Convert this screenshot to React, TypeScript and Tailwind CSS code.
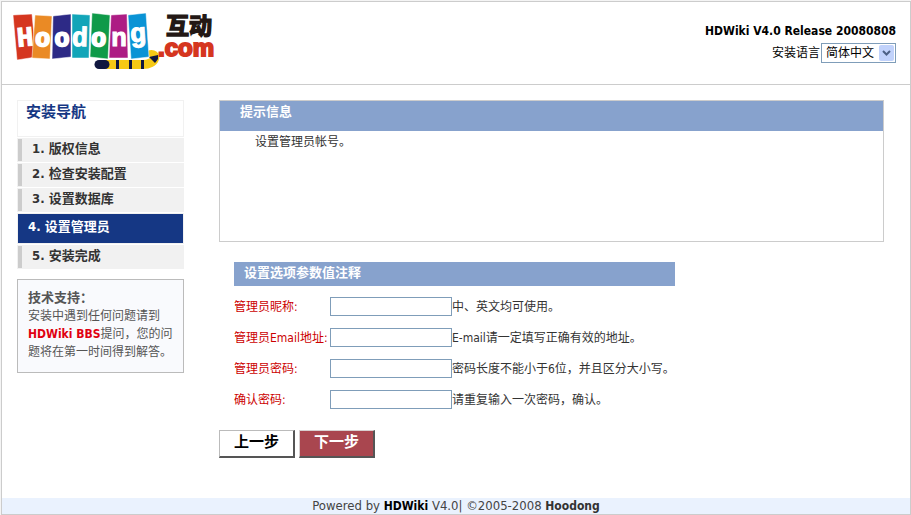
import React from 'react';

const tiles = [
  { points: '13,15 32,14 36,57 17,60', fill: '#d5361f', ch: 'H', x: 25, y: 46, rot: -5, size: 28, stroke: 1 },
  { points: '35,15 52,16 50,59 32,58', fill: '#ea8a25', ch: 'o', x: 43, y: 46, rot: 4, size: 25, stroke: 2 },
  { points: '53,16 71,14 71,57 52,59', fill: '#2d2a86', ch: 'o', x: 62, y: 46, rot: -2, size: 25, stroke: 2 },
  { points: '72,14 90,15 89,58 72,58', fill: '#12a5b8', ch: 'd', x: 80, y: 46, rot: 2, size: 27, stroke: 1 },
  { points: '92,13 110,15 108,59 90,57', fill: '#0f9a49', ch: 'o', x: 99, y: 46, rot: 4, size: 25, stroke: 2 },
  { points: '111,15 127,14 128,58 109,58', fill: '#ad1c84', ch: 'n', x: 119, y: 46, rot: 0, size: 26, stroke: 1 },
  { points: '128,15 146,13 149,57 131,59', fill: '#0a93d5', ch: 'g', x: 138, y: 42, rot: -4, size: 27, stroke: 1 },
];

function Logo() {
  return (
    <svg width="208" height="70" viewBox="12 2 208 70" role="img" aria-label="Hoodong 互动 .com" className="block">
      <path d="M149 55 C158 52 157 65 142 64.500 L100 64.500" fill="none" stroke="#f6c915" strokeWidth="9" />
      <path d="M99 64.500 L105 64.500" stroke="#10173f" strokeWidth="9" strokeLinecap="round" />
      <path d="M117.500 60 v9 M130.500 60 v9 M142.500 60 v9" stroke="#10173f" strokeWidth="3" />
      <path d="M149 57 L158 55 L158 59 L155 63 Z" fill="#10173f" />
      {tiles.map((t, i) => (
        <g key={i}>
          <polygon points={t.points} fill={t.fill} stroke="#fff" strokeWidth="0.5" />
          <text
            x={t.x}
            y={t.y}
            fontSize={t.size}
            textAnchor="middle"
            fill="#fff"
            stroke="#fff"
            strokeWidth={t.stroke}
            transform={`rotate(${t.rot} ${t.x} 36)`}
            className="font-['Liberation_Mono',monospace] font-bold"
          >
            {t.ch}
          </text>
        </g>
      ))}
      <text x="166" y="34" fontSize="23" fill="#231815" stroke="#231815" strokeWidth="1.500" className="font-['Noto_Sans_CJK_SC',sans-serif] font-bold">
        互动
      </text>
      <text x="158" y="56" fontSize="24" fill="#d5361f" stroke="#d5361f" strokeWidth="2" className="font-['Liberation_Sans',sans-serif] font-bold">
        .com
      </text>
    </svg>
  );
}

const steps = ['版权信息', '检查安装配置', '设置数据库', '设置管理员', '安装完成'];
const current = 3;

const fields = [
  { id: 'nick', label: '管理员昵称:', type: 'text', hint: '中、英文均可使用。' },
  { id: 'email', label: '管理员Email地址:', type: 'email', hint: 'E-mail请一定填写正确有效的地址。' },
  { id: 'pass', label: '管理员密码:', type: 'password', hint: '密码长度不能小于6位，并且区分大小写。' },
  { id: 'confirm', label: '确认密码:', type: 'password', hint: '请重复输入一次密码，确认。' },
];

export default function App() {
  return (
    <div className="min-h-screen bg-[#f4f4f4] pt-px pl-px font-['DejaVu_Sans_Condensed','Noto_Sans_CJK_SC',sans-serif] text-xs leading-[18px] text-[#333]">
      <div className="flex min-h-[514px] flex-col border border-[#ccc] bg-white">
        <header className="flex h-[83px] items-start justify-between border-b border-[#ccc] pr-3.5 pl-2.5">
          <Logo />
          <div className="flex flex-col items-end pt-5">
            <strong className="text-xs leading-[18px] text-black">HDWiki V4.0 Release 20080808</strong>
            <div className="mt-[3px] flex items-center text-black">
              <label htmlFor="lang">安装语言</label>
              <div className="relative ml-px">
                <select id="lang" className="block h-5 w-[75px] appearance-none border border-[#7f9db9] bg-white pl-1 text-xs leading-4 text-black">
                  <option>简体中文</option>
                </select>
                <span className="pointer-events-none absolute top-0.5 right-0.5 flex h-4 w-[15px] items-center justify-center rounded-xs bg-[#c1d2fb]">
                  <svg width="9" height="6" viewBox="0 0 9 6" fill="none" stroke="#4d6185" strokeWidth="2">
                    <path d="M1 1 L4.500 4.500 L8 1" />
                  </svg>
                </span>
              </div>
            </div>
          </div>
        </header>

        <div className="flex flex-1 items-start gap-[35px] pt-[15px] pr-[26px] pb-10 pl-[15px]">
          <aside className="w-[167px] shrink-0">
            <nav className="flex flex-col gap-px text-[13px] font-bold">
              <h2 className="h-[37px] border border-[#f1f1f1] pt-0.5 pl-2 text-[15px] leading-[18px] text-[#153784]">安装导航</h2>
              {steps.map((s, i) =>
                i === current ? (
                  <div key={s} aria-current="step" className="h-[31px] border border-[#f1f1f1] bg-[#153784] pl-2.5 leading-[26px] text-white">
                    {i + 1}. {s}
                  </div>
                ) : (
                  <div key={s} className="flex h-6 border border-[#f1f1f1] bg-[#f1f1f1] leading-[20px]">
                    <div className="flex-1 border-l-4 border-[#ccc] pl-2.5">
                      {i + 1}. {s}
                    </div>
                  </div>
                ),
              )}
            </nav>
            <section className="mt-2.5 h-[94px] border border-[#bbb] bg-[#f9fafd] px-2.5 pt-[9px] text-[#555]">
              <h3 className="text-[13px] leading-[18px] font-bold">技术支持：</h3>
              <p>
                安装中遇到任何问题请到
                <a href="#bbs" className="inline-block font-bold text-[#e00010]">HDWiki BBS</a>
                提问，您的问题将在第一时间得到解答。
              </p>
            </section>
          </aside>

          <main className="min-w-0 flex-1">
            <section className="h-[142px] border border-[#ccc]">
              <h2 className="h-[30px] bg-[#87a2cd] pt-0.5 pl-5 text-[13px] leading-[18px] font-bold text-white">提示信息</h2>
              <p className="pt-0.5 pl-[35px]">设置管理员帐号。</p>
            </section>

            <form>
              <div className="px-[15px]">
                <h2 className="mt-5 mb-[11px] h-6 max-w-[441px] bg-[#87a2cd] pl-2.5 text-[13px] leading-[22px] font-bold text-white">设置选项参数值注释</h2>
                <div className="flex flex-col gap-3">
                  {fields.map((f) => (
                    <div key={f.id} className="flex h-[19px] items-center leading-5">
                      <label htmlFor={f.id} className="w-24 shrink-0 whitespace-nowrap text-[#c00]">{f.label}</label>
                      <input id={f.id} type={f.type} className="h-[19px] w-[122px] shrink-0 border border-[#7f9db9] bg-white px-1" />
                      <span className="whitespace-nowrap">{f.hint}</span>
                    </div>
                  ))}
                </div>
              </div>
              <div className="mt-[21px] flex gap-1 text-[15px] font-bold">
                <button type="button" className="h-7 w-[76px] border-2 border-t border-l border-t-[#bbb] border-r-[#555] border-b-[#555] border-l-[#bbb] bg-white pb-1 leading-5 text-black">
                  上一步
                </button>
                <button type="button" className="h-7 w-[76px] border-2 border-t border-l border-t-[#d8d0d0] border-r-[#555] border-b-[#555] border-l-[#d8d0d0] bg-[#a9464f] pb-1 leading-5 text-white">
                  下一步
                </button>
              </div>
            </form>
          </main>
        </div>

        <footer className="h-4 bg-[#eaf2fe] text-center text-[13px] leading-4 text-[#444]">
          Powered by <b className="text-xs leading-4 text-black">HDWiki</b> V4.0| ©2005-2008 <b className="text-xs leading-4 text-[#333]">Hoodong</b>
        </footer>
      </div>
    </div>
  );
}
